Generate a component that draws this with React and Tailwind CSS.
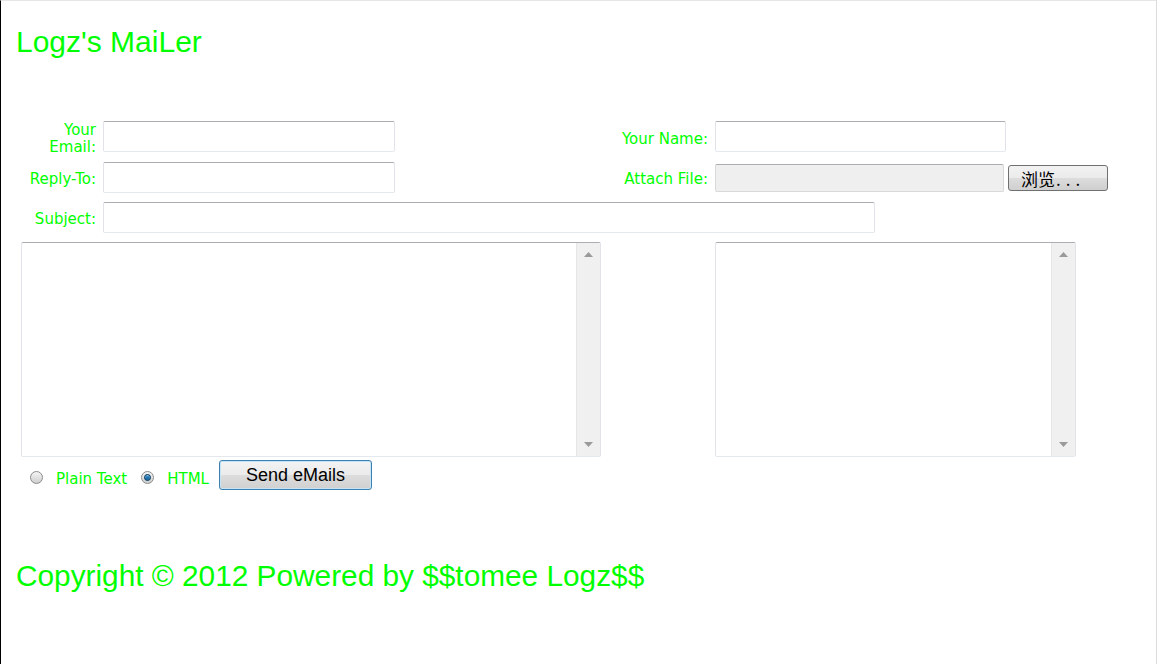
const label = 'text-[15px] leading-[17px] text-[#00ff00] text-right pr-[5px] pt-[4px] self-center'
const box = 'border border-[#e2e3ea] border-t-[#abadb3] border-b-[#e3e9ef] rounded-[2px] bg-white'

function Scrollbar() {
  return (
    <div className="w-[24px] h-full bg-[#f0f0f0] border-l border-[#e6e6e6] flex flex-col items-center justify-between py-[9px]">
      <svg width="9" height="5" viewBox="0 0 9 5"><path d="M4.5 0L9 5H0z" fill="#9a9a9a" /></svg>
      <svg width="9" height="5" viewBox="0 0 9 5"><path d="M0 0h9L4.5 5z" fill="#9a9a9a" /></svg>
    </div>
  )
}

function Area({ w }) {
  return (
    <div className={box + ' ml-[2px] h-[215px] flex overflow-hidden ' + w}>
      <textarea className="flex-1 resize-none outline-none" />
      <Scrollbar />
    </div>
  )
}

function Radio({ on }) {
  return (
    <span className="mt-[5px] w-[13px] h-[13px] rounded-full border border-[#8b8b8b] bg-gradient-to-b from-[#f4f4f4] to-[#cfcfcf] flex items-center justify-center">
      {on && <span className="w-[7px] h-[7px] rounded-full bg-[#1f6fa8] border border-[#0d3a5c] shadow-[inset_0_1px_1px_#8fd0ff]" />}
    </span>
  )
}

export default function App() {
  return (
    <div className="w-[1157px] h-[664px] bg-white border-l border-black border-t border-t-[#e6e6e6] border-r border-r-[#dcdcdc] overflow-hidden font-['DejaVu_Sans',sans-serif]">
      <h1 className="mt-[24px] ml-[15px] text-[30px] leading-[34px] font-normal text-[#00ff00] font-['Liberation_Sans',Arial,sans-serif]">
        Logz's MaiLer
      </h1>

      <div className="mt-[62px] ml-[18px] grid grid-cols-[82px_502px_110px_1fr] grid-rows-[32px_31px_31px_215px] gap-y-[9px]">
        <div className={label}>Your Email:</div>
        <div><input className={box + ' ml-[2px] w-[292px] h-[31px]'} /></div>
        <div className={label}>Your Name:</div>
        <div><input className={box + ' ml-[2px] w-[291px] h-[31px]'} /></div>

        <div className={label}>Reply-To:</div>
        <div><input className={box + ' ml-[2px] w-[292px] h-[31px]'} /></div>
        <div className={label}>Attach File:</div>
        <div className="flex items-start pt-[2px]">
          <div className="ml-[2px] w-[289px] h-[28px] bg-[#efefef] border border-[#d9d9d9] border-t-[#abadb3] rounded-[2px]" />
          <button className="ml-[4px] mt-[1px] w-[100px] h-[26px] rounded-[3px] border border-[#707070] bg-[linear-gradient(#f2f2f2,#ebebeb_50%,#dddddd_50%,#cfcfcf)] pl-[12px] text-[17px] leading-none text-black font-['Noto_Sans_CJK_SC',sans-serif] flex items-center">
            浏览<span className="tracking-[5px] pl-[1px]">...</span>
          </button>
        </div>

        <div className={label}>Subject:</div>
        <div className="col-span-3"><input className={box + ' ml-[2px] w-[772px] h-[31px]'} /></div>

        <div className="col-span-2"><Area w="w-[580px]" /></div>
        <div />
        <div><Area w="w-[361px]" /></div>
      </div>

      <div className="ml-[18px] mt-[3px] h-[30px] flex items-center text-[15px] text-[#00ff00]">
        <span className="ml-[11px]"><Radio /></span>
        <span className="ml-[13px] mt-[8px]">Plain Text</span>
        <span className="ml-[14px]"><Radio on /></span>
        <span className="ml-[13px] mt-[8px]">HTML</span>
        <button className="ml-[10px] w-[153px] h-[30px] rounded-[3px] border border-[#3c7fb1] bg-[linear-gradient(#f3f3f3,#ebebeb_50%,#dddddd_50%,#d0d0d0)] shadow-[inset_0_0_0_1px_#c4e5f6] text-[18px] leading-none text-black font-['Liberation_Sans',Arial,sans-serif]">
          Send eMails
        </button>
      </div>

      <p className="mt-[69px] ml-[15px] text-[29.8px] leading-[34px] text-[#00ff00] font-['Liberation_Sans',Arial,sans-serif]">
        Copyright © 2012 Powered by $$tomee Logz$$
      </p>
    </div>
  )
}
